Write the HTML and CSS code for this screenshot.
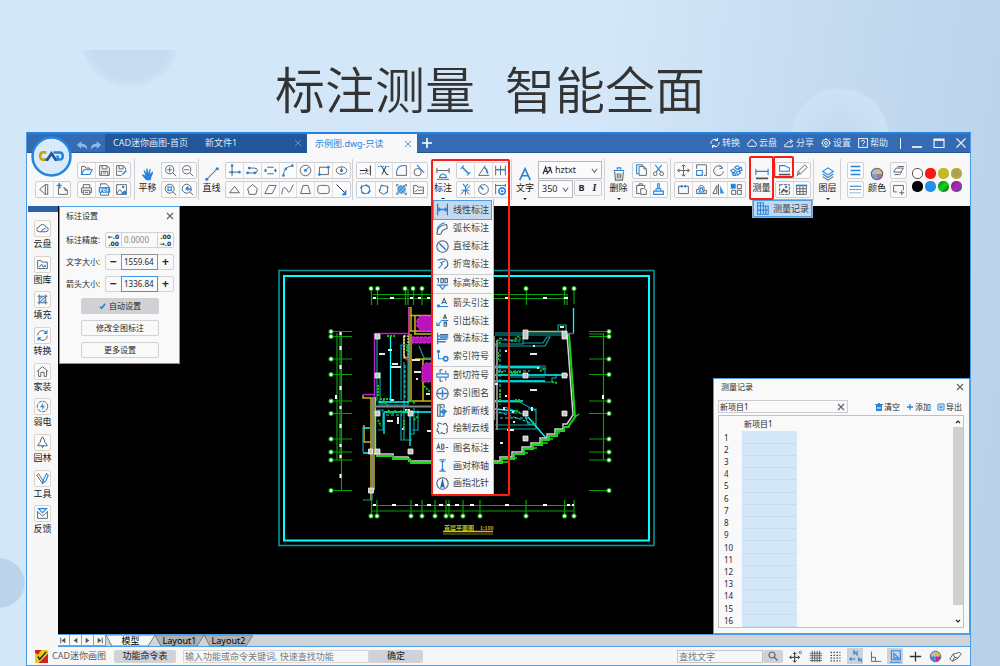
FILE: index.html
```html
<!DOCTYPE html>
<html lang="zh-CN">
<head>
<meta charset="utf-8">
<meta name="viewport" content="width=device-width, initial-scale=1">
<title>CAD迷你画图</title>
<link rel="stylesheet" href="styles.css">
</head>
<body>
<header class="hero"><h1><span>标注测量</span><span>智能全面</span></h1></header>
<main class="app">
  <div class="titlebar">
    <div class="logo"><svg viewBox="0 0 40 40"><circle cx="20" cy="20" r="18.500" fill="#d9eafa" stroke="#2186e0" stroke-width="2.400"/><path d="M15 16H11.500Q9 16 9 19.500T11.500 23H14" fill="none" stroke="#c5a60a" stroke-width="2.600"/><path d="M14 23H16L20 17L24 23H26" fill="none" stroke="#2456a0" stroke-width="2.600"/><path d="M22 16H28Q31 16 31 19.500T28 23H26V19" fill="none" stroke="#2383dc" stroke-width="2.400"/></svg></div>
    <div class="history">
      <button class="plain" aria-label="撤销"><svg class="ic12" viewBox="0 0 16 16"><path d="M1 8L7 3V6Q15 6 15 14Q12 10 7 10V13Z" fill="#8fb8e6"/></svg></button>
      <button class="plain" aria-label="重做"><svg class="ic12" viewBox="0 0 16 16"><path d="M15 8L9 3V6Q1 6 1 14Q4 10 9 10V13Z" fill="#8fb8e6"/></svg></button>
    </div>
    <nav class="filetabs">
      <button class="filetab home">CAD迷你画图-首页</button>
      <button class="filetab file">新文件1<svg class="x" viewBox="0 0 8 8"><path d="M1 1L7 7M7 1L1 7"/></svg></button>
      <button class="filetab file current">示例图.dwg-只读<svg class="x" viewBox="0 0 8 8"><path d="M1 1L7 7M7 1L1 7"/></svg></button>
      <button class="plain addtab" aria-label="新建"><svg class="ic10" viewBox="0 0 10 10"><path class="ws" d="M5 0V10M0 5H10" stroke-width="2"/></svg></button>
    </nav>
    <div class="actions">
      <button class="plain"><svg class="ic10" viewBox="0 0 12 12"><path class="w" d="M1 7A5 5 0 0 1 9 2.500M11 5A5 5 0 0 1 3 9.500M9 0V3H6M3 12V9H6"/></svg>转换</button>
      <button class="plain"><svg class="ic10" viewBox="0 0 12 12"><path class="w" d="M3 10H9Q11.500 10 11.500 7.500T9 5.500Q8.500 2 6 2T3 5.500Q.5 5.500 .5 7.700T3 10Z"/></svg>云盘</button>
      <button class="plain"><svg class="ic10" viewBox="0 0 12 12"><path class="w" d="M1 7V10.500H10V8M3 8Q3 4 9 4M7 1.500L10.500 4L7 6.500"/></svg>分享</button>
      <button class="plain"><svg class="ic10" viewBox="0 0 12 12"><circle class="w" cx="6" cy="6" r="4.300"/><circle class="w" cx="6" cy="6" r="1.700"/><path class="w" d="M6 0V2M6 10V12M0 6H2M10 6H12M2 2L3 3M9 9L10 10M10 2L9 3M3 9L2 10"/></svg>设置</button>
      <button class="plain"><svg class="ic10" viewBox="0 0 12 12"><rect class="w" x=".7" y=".7" width="10.600" height="10.600"/><path class="w" d="M4 4.500Q4 3 6 3T8 4.500T6 7M6 8.300V9.500"/></svg>帮助</button>
    </div>
    <div class="winbuttons">
      <button class="plain" aria-label="最小化"><svg class="ic12" viewBox="0 0 12 12"><path class="ws" d="M1 10H11"/></svg></button>
      <button class="plain" aria-label="最大化"><svg class="ic12" viewBox="0 0 12 12"><path class="w" d="M1 2H11V10.500H1Z"/><path class="ws" d="M1 3H11"/></svg></button>
      <button class="plain" aria-label="关闭"><svg class="ic12" viewBox="0 0 12 12"><path class="w" d="M1.500 1.500L10.500 10.500M10.500 1.500L1.500 10.500"/></svg></button>
    </div>
  </div>

  <div class="ribbon">
    <section class="sec file-sec">
      <div class="cells c2 low">
        <button aria-label="返回"><svg viewBox="0 0 16 16"><path class="g" d="M9 2L2 8L9 14ZM12 2V14H9M9 2H12"/></svg></button>
        <button aria-label="导入"><svg viewBox="0 0 16 16"><path class="g" d="M6 6H3V14H14V9L11 6H9M11 6V9H14"/><path class="b2" d="M4 0V6M1 3H7"/></svg></button>
      </div>
      <div class="stack">
        <div class="cells c3">
          <button aria-label="打开"><svg viewBox="0 0 16 16"><path class="g" d="M2 13V3H6L7 5H12V7"/><path class="b" d="M2 13L5 7H15L12 13Z"/></svg></button>
          <button aria-label="保存"><svg viewBox="0 0 16 16"><path class="g" d="M2 2H11L14 5V14H2ZM5 2V6H11V2M4 14V9H12V14M6 11H10"/></svg></button>
          <button aria-label="另存为"><svg viewBox="0 0 16 16"><path class="g" d="M8 14H2V2H10L13 5V7M5 2V6H10V2M4 9H9"/><path class="b2" d="M9 13L14 8"/></svg></button>
        </div>
        <div class="cells c3">
          <button aria-label="打印"><svg viewBox="0 0 16 16"><path class="g" d="M4 6V2H12V6M4 12H2V6H14V12H12M4 9H12V14H4ZM6 11.500H10"/></svg></button>
          <button aria-label="导出文档"><svg viewBox="0 0 16 16"><path class="g" d="M3 4V1H10L13 4V5M3 12V15H13V12"/><path d="M1 5H15V12H1Z" fill="#2585de"/><path d="M3 11V7H5V9H3M7 7V11Q9 11 9 9T7 7M11 11V7H13M11 9H13" stroke="#fff" fill="none"/></svg></button>
          <button aria-label="导出图片"><svg viewBox="0 0 16 16"><path class="g" d="M2 2H14V14H2ZM2 13L6 8L9 12"/><path class="bf" d="M8 12L12 9L14 11V14H8Z"/><circle class="bf" cx="10" cy="5" r="1.500"/></svg></button>
        </div>
      </div>
    </section>

    <section class="sec">
      <button class="big"><svg viewBox="0 0 16 16"><path class="bf" d="M6 15Q3 12 1 9Q2 7 5 10L3 4Q4 2 6 7L6 2Q8 0 8 7L10 2Q12 1 10 8L13 5Q15 5 12 11L11 15Z"/></svg>平移</button>
      <div class="stack">
        <div class="cells c2">
          <button aria-label="放大"><svg viewBox="0 0 16 16"><circle class="g" cx="7" cy="7" r="5"/><path class="g" d="M11 11L15 15"/><path class="b" d="M4 7H10M7 4V10"/></svg></button>
          <button aria-label="缩小"><svg viewBox="0 0 16 16"><circle class="g" cx="7" cy="7" r="5"/><path class="g" d="M11 11L15 15"/><path class="b" d="M4 7H10"/></svg></button>
        </div>
        <div class="cells c2">
          <button aria-label="窗口缩放"><svg viewBox="0 0 16 16"><circle class="g" cx="7" cy="7" r="5.500"/><path class="g" d="M11 11L15 15"/><path class="b" d="M5 4V10M9 4V10M4 5H10M4 9H10"/></svg></button>
          <button aria-label="上次缩放"><svg viewBox="0 0 16 16"><circle class="g" cx="7" cy="7" r="5.500"/><path class="g" d="M11 11L15 15"/><path class="bf" d="M5 7L9 3V6Q13 6 14 10Q12 8 9 8V10Z"/></svg></button>
        </div>
      </div>
    </section>

    <section class="sec">
      <button class="big"><svg viewBox="0 0 16 16"><path class="g" d="M2 14L14 2"/><circle class="bf" cx="2" cy="14" r="1.800"/><circle class="bf" cx="14" cy="2" r="1.800"/></svg>直线</button>
      <div class="stack">
        <div class="cells c7">
          <button aria-label="构造线"><svg viewBox="0 0 16 16"><path class="g" d="M5 1V15M1 10H15"/><circle class="bf" cx="5" cy="2" r="1.600"/><circle class="bf" cx="5" cy="10" r="1.800"/><circle class="bf" cx="14" cy="10" r="1.600"/></svg></button>
          <button aria-label="多段线"><svg viewBox="0 0 16 16"><path class="g" d="M4 5H10Q14 5 14 8T10 11H2"/><circle class="bf" cx="4" cy="5" r="1.700"/><circle class="bf" cx="2" cy="11" r="1.700"/><circle class="bf" cx="11" cy="11" r="1.700"/></svg></button>
          <button aria-label="跑道形"><svg viewBox="0 0 16 16"><path class="g" d="M4 4H12M4 12H12M2 6Q1 8 2 10M14 6Q15 8 14 10"/><circle class="bf" cx="2" cy="8" r="1.500"/><circle class="bf" cx="14" cy="8" r="1.500"/></svg></button>
          <button aria-label="圆弧"><svg viewBox="0 0 16 16"><path class="g" d="M3 14Q3 4 14 2"/><circle class="bf" cx="3" cy="14" r="1.600"/><circle class="bf" cx="6" cy="6" r="1.600"/><circle class="bf" cx="14" cy="2" r="1.600"/></svg></button>
          <button aria-label="圆"><svg viewBox="0 0 16 16"><circle class="g" cx="8" cy="8" r="6.500"/><circle class="bf" cx="8" cy="8" r="1.800"/><path class="b" d="M8 8L12 4"/></svg></button>
          <button aria-label="矩形"><svg viewBox="0 0 16 16"><path class="g" d="M3 4H14V13H3Z"/><circle class="bf" cx="3" cy="13" r="1.700"/><circle class="bf" cx="14" cy="4" r="1.700"/></svg></button>
          <button aria-label="椭圆"><svg viewBox="0 0 16 16"><ellipse class="g" cx="8" cy="8" rx="6.500" ry="4.500"/><circle class="bf" cx="8" cy="8" r="2"/><path class="b" d="M8 4V8"/></svg></button>
        </div>
        <div class="cells c7">
          <button aria-label="三角形"><svg viewBox="0 0 16 16"><path class="g" d="M8 4L14 12H2Z"/></svg></button>
          <button aria-label="五边形"><svg viewBox="0 0 16 16"><path class="g" d="M8 2L14 7L12 14H4L2 7Z"/></svg></button>
          <button aria-label="平行四边形"><svg viewBox="0 0 16 16"><path class="g" d="M6 3H15L10 13H1Z"/></svg></button>
          <button aria-label="样条"><svg viewBox="0 0 16 16"><path class="g" d="M1 14Q2 4 5 6T9 11T15 2"/></svg></button>
          <button aria-label="梯形"><svg viewBox="0 0 16 16"><path class="g" d="M5 3H11L14 13H2Z"/></svg></button>
          <button aria-label="圆角矩形"><svg viewBox="0 0 16 16"><rect class="g" x="1" y="3" width="14" height="10" rx="3"/></svg></button>
          <button aria-label="箭头"><svg viewBox="0 0 16 16"><path class="k" d="M2 2L12 12"/><path class="bf" d="M14 8V15H8Z"/></svg></button>
        </div>
      </div>
    </section>

    <section class="sec nosep">
      <div class="stack">
        <div class="cells c4">
          <button aria-label="延伸"><svg viewBox="0 0 16 16"><path class="k" d="M1 8H10M8 5L11 8L8 11M14 2V14"/><path class="b" d="M1 12H12" stroke-dasharray="2 1"/></svg></button>
          <button aria-label="修剪"><svg viewBox="0 0 16 16"><path class="k" d="M5 2L12 13M11 3L6 13M12 13H14"/><path class="b" d="M1 3H15" stroke-dasharray="2 1"/></svg></button>
          <button aria-label="圆角"><svg viewBox="0 0 16 16"><path class="g" d="M2 9V14H14V2H9"/><path class="b" d="M2 9Q3 3 9 2"/></svg></button>
          <button aria-label="相切"><svg viewBox="0 0 16 16"><circle class="g" cx="7" cy="10" r="4.500"/><path class="b" d="M6 1L15 11"/></svg></button>
        </div>
        <div class="cells c4">
          <button aria-label="云线"><svg viewBox="0 0 16 16"><circle class="g" cx="8" cy="8" r="5"/><path class="b2" d="M8 2L13 5M14 9L11 13M4 3L2 7M3 11L6 13"/></svg></button>
          <button aria-label="多边形云线"><svg viewBox="0 0 16 16"><path class="g" d="M5 3L13 4L13 11L8 14L3 11Z"/><path class="b2" d="M5 3H7M13 4V7M13 11L11 12M3 8V10"/></svg></button>
          <button aria-label="填充"><svg viewBox="0 0 16 16"><path d="M3 3H13V13H3Z" fill="#7fb6ea"/><path class="b" d="M3 8L8 3M3 12L12 3M7 13L13 7"/><path class="g" d="M2 4V2H4M12 2H14V4M14 12V14H12M4 14H2V12"/></svg></button>
          <button aria-label="图库"><svg viewBox="0 0 16 16"><path class="g" d="M2 13V3H6L7 5H14V13ZM4 11L7 8L9 10L11 8L13 10"/></svg></button>
        </div>
      </div>
    </section>

    <section class="sec">
      <button class="big more"><svg viewBox="0 0 16 16"><path class="g" d="M1 1V7M15 1V7M1 4H15M1 14H15"/><path class="b" d="M4 12Q5 8 8 8T12 12Z"/></svg>标注</button>
      <div class="stack">
        <div class="cells c3">
          <button aria-label="对齐标注"><svg viewBox="0 0 16 16"><path class="b2" d="M4 4L12 12"/><path class="b" d="M2 6L6 2M10 14L14 10"/></svg></button>
          <button aria-label="角度标注"><svg viewBox="0 0 16 16"><path class="g" d="M10 2L2 14H15"/><path class="b2" d="M9 4Q13 7 13 12"/></svg></button>
          <button aria-label="连续标注"><svg viewBox="0 0 16 16"><path class="g" d="M2 2V14M8 2V14M14 2V14"/><path class="b2" d="M2 7H14"/></svg></button>
        </div>
        <div class="cells c3">
          <button aria-label="坐标标注"><svg viewBox="0 0 16 16"><path class="g" d="M2 14L14 3M8 9L13 14"/><path class="b" d="M5 1L8 5L11 1M8 5V15M3 9H13"/></svg></button>
          <button aria-label="半径标注"><svg viewBox="0 0 16 16"><circle class="g" cx="8" cy="8" r="6"/><path class="b2" d="M8 8L4 4"/></svg></button>
          <button aria-label="标注样式"><svg viewBox="0 0 16 16"><path class="g" d="M2 1V14M14 1V5M2 3H14"/><circle class="b2" cx="10" cy="10" r="4"/><circle class="bf" cx="10" cy="10" r="1.500"/></svg></button>
        </div>
      </div>
      <div class="callout tall"></div>
      <div class="menu">
        <button class="on"><svg viewBox="0 0 16 16"><path class="n" d="M2 1V15M14 1V15"/><path class="b2" d="M2 8H14M5 6L3 8L5 10M11 6L13 8L11 10"/></svg>线性标注</button>
        <button><svg viewBox="0 0 16 16"><path class="n" d="M1 15Q1 4 13 3M6 15Q7 9 14 8M1 15H6M13 3L14 8"/><path class="b" d="M1 9Q4 2 11 1"/></svg>弧长标注</button>
        <button><svg viewBox="0 0 16 16"><circle class="n" cx="8" cy="8" r="7"/><path class="b2" d="M4 4L12 12"/></svg>直径标注</button>
        <button><svg viewBox="0 0 16 16"><path class="n" d="M2 4Q12 0 14 6T10 14"/><path class="b" d="M3 14L8 9L6 7L11 5"/></svg>折弯标注</button>
        <hr>
        <button><svg viewBox="0 0 16 16"><path class="n" d="M1 2H3V7M6 2H9V7H6ZM11 2H14V7H11Z"/><path class="b" d="M1 10H15M4 10L8 15L12 10"/></svg>标高标注</button>
        <hr>
        <button><svg viewBox="0 0 16 16"><path class="n" d="M7 10L10 3L13 10M8 8H12"/><path class="b" d="M2 13H15"/><circle class="bf" cx="3" cy="12" r="2"/></svg>箭头引注</button>
        <button><svg viewBox="0 0 16 16"><path class="n" d="M9 6L11 1L13 6M10 5H12M10 10V15H13V10ZM10 12H13"/><path class="b" d="M2 14L7 8H15M1 10V14H5"/></svg>引出标注</button>
        <button><svg viewBox="0 0 16 16"><path class="n" d="M2 1V15M5 3H15M5 7H15"/><path class="b2" d="M2 5H15M2 9H14M2 12H12"/></svg>做法标注</button>
        <button><svg viewBox="0 0 16 16"><path class="b" d="M3 3V12H9"/><circle class="bf" cx="3" cy="3" r="2"/><circle class="b2" cx="12" cy="12" r="2.600"/></svg>索引符号</button>
        <hr>
        <button><svg viewBox="0 0 16 16"><path class="n" d="M5 5V1H8M5 11V15H8M12 2V5M12 11V14"/><path class="b" d="M1 6H15V10H1Z"/></svg>剖切符号</button>
        <button><svg viewBox="0 0 16 16"><circle class="n" cx="8" cy="8" r="7"/><path class="b2" d="M1 8H15M8 3V13"/></svg>索引图名</button>
        <button><svg viewBox="0 0 16 16"><path class="n" d="M10 1H2V15H10M5 1V15M8 4H5M10 1V5M10 12V15"/><path class="bf" d="M8 5L14 9L8 14V11H5V8H8Z"/></svg>加折断线</button>
        <button><svg viewBox="0 0 16 16"><path class="n" d="M6 2Q2 0 2 4Q4 6 2 8Q0 12 3 12Q3 16 7 13Q10 16 13 13Q15 11 13 9Q16 6 13 4Q13 0 9 3Q8 3 6 2" stroke-dasharray="8 1"/></svg>绘制云线</button>
        <hr>
        <button><svg viewBox="0 0 16 16"><path class="n" d="M1 10L3 4L5 10M2 8H4M7 4V10H9Q11 9 9 7Q11 5 9 4Z"/><path class="b" d="M1 13H11"/><path class="n" d="M12 8H15"/></svg>图名标注</button>
        <button><svg viewBox="0 0 16 16"><path class="b" d="M4 1H12M4 15H12M8 2V14"/><path class="bf" d="M5 2H11L8 5ZM5 14H11L8 11Z"/></svg>画对称轴</button>
        <button><svg viewBox="0 0 16 16"><circle class="n" cx="8" cy="8" r="7"/><path d="M8 1L11 14L8 12L5 14Z" fill="#1c67b8"/></svg>画指北针</button>
      </div>
    </section>

    <section class="sec">
      <button class="big more"><svg viewBox="0 0 16 16"><path class="b2" d="M2 15L8 2L14 15M4 10H12"/></svg>文字</button>
      <div class="stack text-tools">
        <label class="pick font"><svg class="fonticon" viewBox="0 0 12 12"><path class="k" d="M1 10L4 2L6 8M2 7H5M6 3H10M8 2L11 9M10 4L5 10"/></svg>
          <select aria-label="字体"><option>hztxt</option></select><svg class="chev" viewBox="0 0 8 8"><path class="g" d="M1 2L4 6L7 2"/></svg></label>
        <div class="row">
          <label class="pick size"><select aria-label="字号"><option>350</option></select><svg class="chev" viewBox="0 0 8 8"><path class="g" d="M1 2L4 6L7 2"/></svg></label>
          <div class="style"><button class="bold">B</button><button class="ital">I</button></div>
        </div>
      </div>
    </section>

    <section class="sec">
      <button class="big more"><svg viewBox="0 0 16 16"><path class="g" d="M3 5L4 15H12L13 5M6 7V13M8 7V13M10 7V13"/><path class="b" d="M2 4H14M6 3V1H10V3"/></svg>删除</button>
      <div class="stack">
        <div class="cells c2">
          <button aria-label="复制"><svg viewBox="0 0 16 16"><path class="b" d="M5 12H2V1H9V3"/><path class="g" d="M5 3H11L14 6V14H5ZM11 3V6H14"/></svg></button>
          <button aria-label="剪切"><svg viewBox="0 0 16 16"><path class="b" d="M4 1L11 10M12 1L5 10"/><circle class="g" cx="4" cy="12" r="2.300"/><circle class="g" cx="12" cy="12" r="2.300"/></svg></button>
        </div>
        <div class="cells c2">
          <button aria-label="粘贴"><svg viewBox="0 0 16 16"><path class="g" d="M6 13H2V3H12V6M5 3V1H9V3M7 7H12L14 9V14H7Z"/></svg></button>
          <button aria-label="格式刷"><svg viewBox="0 0 16 16"><path class="b" d="M2 14H14V10H2ZM7 7V1H9V7M5 10V7H11V10"/></svg></button>
        </div>
      </div>
    </section>

    <section class="sec nosep">
      <div class="stack">
        <div class="cells c4">
          <button aria-label="移动"><svg viewBox="0 0 16 16"><path class="g" d="M8 2V14M2 8H14"/><path class="k" d="M6 3L8 1L10 3M6 13L8 15L10 13M3 6L1 8L3 10M13 6L15 8L13 10"/></svg></button>
          <button aria-label="缩放"><svg viewBox="0 0 16 16"><path class="g" d="M2 6V1H14V14H11"/><path class="b" d="M2 8H9V14H2Z"/></svg></button>
          <button aria-label="旋转"><svg viewBox="0 0 16 16"><path class="g" d="M13 5A6 6 0 1 0 14 9M9 1L13 5L9 6"/></svg></button>
          <button aria-label="阵列"><svg viewBox="0 0 16 16"><path class="b" d="M1 8L4 6L7 8L4 11ZM6 4L9 2L12 4L9 7ZM11 6L14 4L15 8L12 9ZM8 10L11 9L13 11L9 14ZM3 12L6 11L7 14H4Z"/></svg></button>
        </div>
        <div class="cells c4">
          <button aria-label="打断"><svg viewBox="0 0 16 16"><path class="g" d="M5 4H2V13H14V4H11"/><circle class="bf" cx="6" cy="4" r="1.500"/><circle class="bf" cx="10" cy="4" r="1.500"/></svg></button>
          <button aria-label="偏移"><svg viewBox="0 0 16 16"><path class="g" d="M2 13H14V9H11Q12 3 8 3T5 8H2Z"/><path class="b" d="M5 11H11Q9 8 9 6H7Q7 8 5 11Z"/></svg></button>
          <button aria-label="镜像"><svg viewBox="0 0 16 16"><path class="g" d="M6 3V13H1ZM8 1V15"/><path d="M10 3V13H15Z" fill="#3e8fdc"/></svg></button>
          <button aria-label="矩形阵列"><svg viewBox="0 0 16 16"><path class="g" d="M9 2H14V7H9ZM2 9H7V14H2ZM9 9H14V14H9Z"/><path class="bf" d="M1 1H7V7H1Z"/></svg></button>
        </div>
      </div>
    </section>

    <section class="sec">
      <button class="big more"><svg viewBox="0 0 16 16"><path class="b" d="M1 2V9M15 2V9M1 5H15"/><path class="g2" d="M1 13H15"/></svg>测量</button>
      <div class="stack">
        <div class="cells c2">
          <button aria-label="面积"><svg viewBox="0 0 16 16"><path class="b" d="M2 9V2H8L14 5V9Z"/><path class="g2" d="M1 13H15"/></svg></button>
          <button aria-label="画笔"><svg viewBox="0 0 16 16"><path class="g" d="M3 13L4 9L12 1L15 4L7 12ZM4 9L7 12M2 15L5 12"/></svg></button>
        </div>
        <div class="cells c2">
          <button aria-label="插入图片"><svg viewBox="0 0 16 16"><path class="g" d="M2 2H14V14H2Z" stroke-dasharray="4 1"/><path class="g2" d="M4 12L7 8L10 11L12 9"/><circle class="bf" cx="10" cy="5" r="1.500"/></svg></button>
          <button aria-label="表格"><svg viewBox="0 0 16 16"><path class="g" d="M2 3H14V14H2ZM6 3V14M10 3V14M2 7H14M2 10.500H14"/><path class="b2" d="M1 3H15"/></svg></button>
        </div>
      </div>
      <div class="callout measure"></div>
      <div class="callout area"></div>
      <div class="menu single"><button class="on"><svg viewBox="0 0 16 16"><path class="b" d="M2 1H9V15H2ZM5.500 1V15M2 5H15V15H9M2 10H15M12 5V15"/></svg>测量记录</button></div>
    </section>

    <section class="sec">
      <button class="big more"><svg viewBox="0 0 16 16"><path class="b" d="M8 1L14 5L8 9L2 5Z"/><path class="b" d="M2 8L8 12L14 8"/><path class="g" d="M2 11L8 15L14 11"/></svg>图层</button>
    </section>

    <section class="sec nosep colors">
      <div class="stack">
        <div class="cells c1"><button aria-label="线宽"><svg viewBox="0 0 16 16"><path class="b2" d="M2 3H14M2 8H14M2 13H14"/></svg></button></div>
        <div class="cells c1"><button aria-label="线型"><svg viewBox="0 0 16 16"><path class="b" d="M1 4H15"/><path class="b" d="M1 8H15" stroke-dasharray="3 1"/><path class="b" d="M1 12H15" stroke-dasharray="1 1"/></svg></button></div>
      </div>
      <button class="big"><svg viewBox="0 0 16 16"><circle cx="8" cy="8" r="6.500" fill="#b9b9c2"/><path d="M8 8V1.500A6.500 6.500 0 0 1 14.500 8Z" fill="#d8c45f"/><path d="M8 8H14.500A6.500 6.500 0 0 1 8 14.500Z" fill="#b86aa5"/><path d="M8 8V14.500A6.500 6.500 0 0 1 1.500 8Z" fill="#79a4c9"/><circle class="g" cx="8" cy="8" r="6.500"/></svg>颜色</button>
      <div class="stack">
        <div class="cells c1"><button aria-label="匹配"><svg viewBox="0 0 16 16"><path class="g" d="M2 10L5 5H14L11 10ZM7 3H15M3 13H9L12 10"/></svg></button></div>
        <div class="cells c1"><button aria-label="图框"><svg viewBox="0 0 16 16"><path class="g" d="M6 11H2V3H14V9M9 12H15M12 9V15"/></svg></button></div>
      </div>
      <div class="swatches"><button class="s-white" aria-label="白"></button><button class="s-red" aria-label="红"></button><button class="s-yellow" aria-label="黄"></button><button class="s-olive" aria-label="橄榄"></button><button class="s-black" aria-label="黑"></button><button class="s-blue" aria-label="蓝"></button><button class="s-green" aria-label="绿"></button><button class="s-purple" aria-label="紫"></button></div>
    </section>
  </div>

  <div class="workspace">
    <aside class="side">
      <div class="grip"></div>
      <nav>
        <button><svg viewBox="0 0 16 16"><path class="g" d="M4 12Q1 12 1 9T4 6Q5 3 8 3T12 6Q15 6 15 9T12 12Z"/><path class="b" d="M7 12Q8 8 12 8"/></svg>云盘</button>
        <button><svg viewBox="0 0 16 16"><path class="g" d="M2 13V3H6L7 5H14V13Z"/><path class="b" d="M4 11L7 8L9 11L11 9L12 11"/></svg>图库</button>
        <button><svg viewBox="0 0 16 16"><path class="g" d="M2 4H14M2 12H14M4 2V14M12 2V14"/><path class="b" d="M5 7L8 4M5 11L11 5M8 12L12 8"/></svg>填充</button>
        <button><svg viewBox="0 0 16 16"><path class="g" d="M2 8A6 6 0 0 1 12 3.500M14 8A6 6 0 0 1 4 12.500"/><path class="bf" d="M14 1V6H9ZM2 15V10H7Z"/></svg>转换</button>
        <button><svg viewBox="0 0 16 16"><path class="g" d="M1 8L8 2L15 8M3 7V14H6V9H10V14H13V7"/></svg>家装</button>
        <button><svg viewBox="0 0 16 16"><circle class="g" cx="8" cy="8" r="6.500" stroke-dasharray="5 1"/><path class="bf" d="M9 3L5 9H8L7 13L11 7H8Z"/></svg>弱电</button>
        <button><svg viewBox="0 0 16 16"><path class="g" d="M8 1L11 6H10L14 12H2L6 6H5Z"/><path class="bf" d="M6 12H10L8 15Z"/></svg>园林</button>
        <button><svg viewBox="0 0 16 16"><path class="g" d="M1 4L3 2L9 11L8 14Z"/><path class="b" d="M8 14L9 10L13 2L15 4L12 11Z"/></svg>工具</button>
        <button><svg viewBox="0 0 16 16"><path class="g" d="M2 5V14H14V5"/><path class="g" d="M2 6L8 11L14 6"/><path class="b" d="M3 2H13L8 7Z"/></svg>反馈</button>
      </nav>
    </aside>

    <div class="stage">
      <div class="canvas">
        <svg class="drawing" viewBox="58 206 912 428" fill="none">
          <rect x="279" y="270.500" width="375" height="275" stroke="#0a9494" stroke-width="1.600"/>
          <rect x="284" y="276" width="365" height="264.500" stroke="#0ff" stroke-width="2"/>
          <g stroke="#0a9d0a" stroke-width="1.200">
            <path d="M373 294.500H567M371 298.500H567M371 505.500H574M371 511H574"/>
            <path d="M371.500 289V305M377.500 289V305M405.500 289V305M408 289V305M413.500 289V305M422 289V305M526.500 289V305M564.500 289V305M567 294V305M574 289V304"/>
            <path d="M371.500 500V516M377 500V516M411 500V516M422 500V516M435 500V516M446 500V516M449 500V516M463 500V516M480 500V516M526 500V516M564.500 500V516M574 500V516"/>
            <path d="M331 331.500H352M331 336.500H352M331 359H352M331 374.500H352M331 401H352M331 413.500H352M331 439H352M331 452H352M331 460H352M331 490.500H352M337 333V460M341.500 331V490M340 333V460"/>
            <path d="M589 331.500H609M589 334H604M589 336.500H609M589 359H609M589 374.500H609M589 401H609M589 413.500H609M589 439H609M589 452H609M589 460H609M589 490.500H609M603.500 333V460"/>
          </g>
          <g stroke="#12b512" stroke-width="5" stroke-linecap="round">
            <path d="M371 288.500h0M377.500 288.500h0M405 288.500h0M413 288.500h0M422 288.500h0M526 288.500h0M564.500 288.500h0M574 288.500h0M371 516h0M377 516h0M411 516h0M422 516h0M435 516h0M446 516h0M452 516h0M463 516h0M480 516h0M526 516h0M564.500 516h0M574 516h0M331 331.500h0M331 336.500h0M331 359h0M331 374.500h0M331 401h0M331 413.500h0M331 439h0M331 452h0M331 460h0M331 490.500h0M609 331.500h0M609 336.500h0M609 359h0M609 374.500h0M609 401h0M609 413.500h0M609 439h0M609 452h0M609 460h0M609 490.500h0"/>
            <path stroke="#fff" stroke-width="3" d="M371 288.500h0M377.500 288.500h0M405 288.500h0M413 288.500h0M422 288.500h0M526 288.500h0M564.500 288.500h0M574 288.500h0M371 516h0M377 516h0M411 516h0M422 516h0M435 516h0M446 516h0M452 516h0M463 516h0M480 516h0M526 516h0M564.500 516h0M574 516h0M331 331.500h0M331 336.500h0M331 359h0M331 374.500h0M331 401h0M331 413.500h0M331 439h0M331 452h0M331 460h0M331 490.500h0M609 331.500h0M609 336.500h0M609 359h0M609 374.500h0M609 401h0M609 413.500h0M609 439h0M609 452h0M609 460h0M609 490.500h0"/>
          </g>
          <g stroke="#fff" stroke-width="2">
            <path d="M373 298h3M390 298h4M410 298h3M418 298h3M427 298h3M505 298h4M543 298h4M564 298h4M373 505h3M392 505h4M415 505h3M427 505h4M439 505h4M447 505h3M455 505h4M470 505h4M505 505h4M543 505h4M567 505h3M572 505h2"/>
            <path d="M340.500 332v3M340.500 346v4M340.500 365v4M340.500 386v4M340.500 406v3M340.500 424v4M340.500 444v3M340.500 455v3M340.500 474v4M336 395v4M603 395v4"/>
          </g>
          <g stroke="#c9b51c" stroke-width="1.500">
            <path d="M409 307V334M411 307V331M409 315.500H470M411 334V401H500M414 334H470M423 359V401M409 334V401H423M415 315V334M409 331H455M527 331.500H563M363 395V398H371V500M374 397V490M364 425V442H371M404 335V358H409M415 359H470"/>
          </g>
          <path d="M404 336V357H408V336Z" stroke="#fff" stroke-dasharray="2 1"/>
          <path d="M417 319H419V316H440V331H419V327H417ZM412 337H440V343H412ZM422 366L426 363H440V382H422Z" fill="#b914b9" stroke="#e030e0" stroke-dasharray="3 1"/>
          <g stroke="#08a3a8" stroke-width="1.200">
            <path d="M377 336V401M380 372V403H386M378 405H408V345H401V400M404 362V440H412M401 410V440H408M377 410H383V430H378M414 408V434H410M419 346L424 358H432M412 430H418V410M363 427V452M372 485V500H363"/>
            <path d="M495 333H562M495 335H570M497 340H520V337M523 337V344H495V346H545L550 337H547L543 343H523M497 346V430M495 366H546M495 368H545V374M495 382H552V378H556V374M510 377H545M495 402H520L536 411V424H528L525 415L505 407M495 425H536M495 429H536V409H528M558 332V325H566V331M495 413H517"/>
          </g>
          <g stroke="#0ff" stroke-width="1.300"><path d="M390.500 335V402M378 402H409M384 412H440M384 413V434M410 412V446M375.500 397V454M495 375H568M495 381H545M495 401H523M495 409L515 411M528 417L546 438M363 428H370M363 453H369M573.500 308V333M495 367H540"/></g>
          <g stroke="#27d7e8" stroke-width="1" stroke-dasharray="3 2"><path d="M405 365V400M499 338L520 342M500 349V405M498 371H530M499 412L531 423M500 418H530M386 415H402"/></g>
          <path d="M375 406.500H440M372.500 397V490M494 336V420M497 340V430" stroke="#858585" stroke-width="2"/>
          <path d="M374.500 397V333.500H409M409 333V308M363 394.500H374M567 333.500H574" stroke="#c01fc0" stroke-width="1.500"/>
          <path d="M567 334L573 415L567 424H563V429H555V434H547V438H540V443H531V447H522V452H512V457H500V461H490V466H470V468H450V461H411L408 457H393V454H374" stroke="#d4d4d4" stroke-width="1.500"/>
          <path d="M569 334L575 417L568 427H564V431H557V436H549V440H542V445H533V449H524V454H514V459H502V463H492V468H450V463H411V461H409V459H393V456H376" stroke="#16d916" stroke-width="2"/>
          <path d="M575 417L579 414M563 427H570M555 433H560M548 439H553M540 443H548M532 448H537M523 453H528M512 458H517M501 462H508" stroke="#16d916" stroke-width="1.500"/>
          <g stroke="#e9e9e9" stroke-width="2"><path d="M379 354h6M392 364h6M391 367h10M388 350h4M414 372h7M416 379h2M426 394h4M427 431h5M387 421h6M412 360h8M530 354h7M530 390h7M507 430h7M398 417v7M403 428v2M391 400h3M505 351h2M533 346h2M537 368h2M504 407v3M512 412h2M532 407v4M495 384h3M505 396h2M405 410h5M513 422h2M560 327h4M500 443h3"/></g>
          <g stroke="#12c512" stroke-width="2" stroke-dasharray="2 1"><path d="M387 336h8M380 399h10M378 385v12M383 400l5 6M388 410l4 4l4-4M397 412h6M408 410l-3 3M411 400l4 4M497 340l4 4M498 352v8M498 372h6M500 390v12M508 341h6M515 339l4-3M510 372h12M540 371l6-3M552 382l5 1M515 400h6M516 410l5 4M532 421l4 4M404 420v10M414 420l4-4M424 386l6 6M407 346v6M378 420l3 6M508 373h10"/></g>
          <g fill="#c8c8c8" stroke="#f4f4f4" stroke-width=".8"><path d="M375 334h5v5h-5zM375 373h5v5h-5zM375 411h5v5h-5zM408 411h5v5h-5zM375 449h5v5h-5zM408 449h5v5h-5zM368.500 449h4v5h-4zM368.500 488h5v5h-5zM523 330h5v9h-5zM562 331h5v8h-5zM523 373h5v5h-5zM562 373h5v5h-5zM523 411h5v5h-5zM562 411h5v5h-5zM523 436h5v5h-5z"/></g>
          <circle cx="407" cy="359" r="1.500" fill="#f22"/>
          <path d="M443 531.500H493" stroke="#d1bd1e" stroke-width="1.500"/><path d="M443 534H493" stroke="#8a7c10" stroke-width="1"/>
          <text x="444" y="530" class="plan">首层平面图</text><text x="480" y="530" class="plan ratio">1:100</text>
        </svg>

        <form class="panel settings">
          <div class="phead"><span>标注设置</span><button type="button" class="plain" aria-label="关闭"><svg class="ic8" viewBox="0 0 8 8"><path class="g" d="M1 1L7 7M7 1L1 7"/></svg></button></div>
          <div class="field"><label for="prec">标注精度:</label><div class="stepper flat"><button type="button" class="dec">←.0<br>.00</button><input id="prec" value="0.0000"><button type="button" class="dec">.00<br>→.0</button></div></div>
          <div class="field"><label for="tsize">文字大小:</label><div class="stepper"><button type="button">−</button><input id="tsize" value="1559.64"><button type="button">+</button></div></div>
          <div class="field"><label for="asize">箭头大小:</label><div class="stepper active"><button type="button">−</button><input id="asize" value="1336.84"><button type="button">+</button></div></div>
          <button type="button" class="wide auto"><svg class="tick" viewBox="0 0 8 8"><path class="b2" d="M1 4L3 6L7 1"/></svg>自动设置</button>
          <button type="button" class="wide">修改全图标注</button>
          <button type="button" class="wide">更多设置</button>
        </form>

        <section class="panel records">
          <div class="phead"><span>测量记录</span><button class="plain" aria-label="关闭"><svg class="ic8" viewBox="0 0 8 8"><path class="g" d="M1 1L7 7M7 1L1 7"/></svg></button></div>
          <div class="rtools">
            <div class="namebox"><input aria-label="项目名称" value="新项目1"><button class="plain" aria-label="清除"><svg class="ic8" viewBox="0 0 8 8"><path class="g" d="M1 1L7 7M7 1L1 7"/></svg></button></div>
            <button class="plain"><svg class="ic8" viewBox="0 0 8 8"><path class="bf" d="M1 2H7V8H1ZM0 1H8V2H0ZM3 0H5V1H3Z"/><path d="M3 4V6M5 4V6" stroke="#fff"/></svg>清空</button>
            <button class="plain"><svg class="ic8" viewBox="0 0 8 8"><path class="b" d="M4 1V7M1 4H7"/></svg>添加</button>
            <button class="plain"><svg class="ic8" viewBox="0 0 8 8"><path d="M1 1H7V7H1ZM3 3H5V5H3Z" fill="none" stroke="#2585de"/></svg>导出</button>
          </div>
          <div class="tablebox">
            <table>
              <thead><tr><th></th><th>新项目1</th></tr></thead>
              <tbody><tr><td>1</td><td></td></tr><tr><td>2</td><td></td></tr><tr><td>3</td><td></td></tr><tr><td>4</td><td></td></tr><tr><td>5</td><td></td></tr><tr><td>6</td><td></td></tr><tr><td>7</td><td></td></tr><tr><td>8</td><td></td></tr><tr><td>9</td><td></td></tr><tr><td>10</td><td></td></tr><tr><td>11</td><td></td></tr><tr><td>12</td><td></td></tr><tr><td>13</td><td></td></tr><tr><td>14</td><td></td></tr><tr><td>15</td><td></td></tr><tr><td>16</td><td></td></tr></tbody>
            </table>
            <div class="scroll"><svg class="ic8" viewBox="0 0 8 8"><path class="k" d="M2 5L4 3L6 5"/></svg><div class="thumb"></div><svg class="ic8" viewBox="0 0 8 8"><path class="k" d="M2 3L4 5L6 3"/></svg></div>
          </div>
        </section>
      </div>
      <div class="sheets">
        <div class="pager"><button aria-label="第一页"><svg viewBox="0 0 12 12"><path class="g" d="M3 3V9"/><path d="M8 3V9L4 6Z" fill="#555"/></svg></button><button aria-label="上一页"><svg viewBox="0 0 12 12"><path d="M8 3V9L4 6Z" fill="#555"/></svg></button><button aria-label="下一页"><svg viewBox="0 0 12 12"><path d="M4 3V9L8 6Z" fill="#555"/></svg></button><button aria-label="最后一页"><svg viewBox="0 0 12 12"><path d="M4 3V9L8 6Z" fill="#555"/><path class="g" d="M9 3V9"/></svg></button></div>
        <button class="sheet"><svg viewBox="0 0 50 12" preserveAspectRatio="none"><path d="M0 0L6 12H43L50 0Z" fill="#f8f8f8" stroke="#777"/></svg><span>模型</span></button>
        <button class="sheet"><svg viewBox="0 0 50 12" preserveAspectRatio="none"><path d="M0 0L6 12H43L50 0Z" fill="#b1b1b1" stroke="#777"/></svg><span>Layout1</span></button>
        <button class="sheet"><svg viewBox="0 0 50 12" preserveAspectRatio="none"><path d="M0 0L6 12H43L50 0Z" fill="#b1b1b1" stroke="#777"/></svg><span>Layout2</span></button>
      </div>
    </div>
  </div>

  <footer class="status">
    <svg class="appmark" viewBox="0 0 14 14"><rect width="14" height="14" rx="1" fill="#e8c91a"/><path d="M4 14L14 4V14Z" fill="#d61f26"/><path d="M0 0H7L3 5L0 3Z" fill="#d61f26"/><path d="M3 7L5 10L12 2" fill="none" stroke="#222" stroke-width="1.500"/></svg>
    <span class="appname">CAD迷你画图</span>
    <button class="grey cmds">功能命令表</button>
    <div class="cmdline"><input aria-label="命令" placeholder="输入功能或命令关键词, 快速查找功能"><button class="grey ok">确定</button></div>
    <div class="find"><input aria-label="查找" placeholder="查找文字"><button class="grey" aria-label="搜索"><svg class="ic10" viewBox="0 0 10 10"><circle class="g" cx="4" cy="4" r="3"/><path class="g" d="M6 6L9.500 9.500"/></svg></button></div>
    <div class="modes">
      <button aria-label="平移视图"><svg viewBox="0 0 16 16"><path class="k" d="M7 3V15M1 9H13M5 5L7 3L9 5M5 13L7 15L9 13M3 7L1 9L3 11M11 7L13 9L11 11"/><circle class="g" cx="14" cy="3" r="1.500"/></svg></button>
      <button aria-label="网格"><svg viewBox="0 0 16 16"><path class="g" d="M4 1V15M7 1V15M10 1V15M13 1V15M1 4H16M1 7H16M1 10H16M1 13H16"/></svg></button>
      <button aria-label="捕捉"><svg viewBox="0 0 16 16"><path stroke="#333" stroke-width="1.600" stroke-dasharray="1.600 2" d="M2 3H14M2 6.500H14M2 10H14M2 13.500H14"/></svg></button>
      <button class="on" aria-label="极轴"><svg viewBox="0 0 16 16"><path class="b" d="M6 6V1L10 6V1M12 14V10L15 14V10M1 11H8M3 9L1 11L3 13"/></svg></button>
      <button aria-label="正交"><svg viewBox="0 0 16 16"><path class="g" d="M3 2V14H15M3 9H8V14"/></svg></button>
      <button class="on" aria-label="显示"><svg viewBox="0 0 16 16"><path class="b" d="M3 1H14V12H3ZM1 15H15M6 4L12 10H6Z"/></svg></button>
      <button aria-label="十字光标"><svg viewBox="0 0 16 16"><path stroke="#333" stroke-width="1.600" d="M8 2V14M1 8H15"/></svg></button>
      <button aria-label="颜色"><svg viewBox="0 0 16 16"><circle cx="8" cy="8" r="6.500" fill="#b9b9c2"/><path d="M8 8V1.500A6.500 6.500 0 0 1 14.500 8Z" fill="#d9c437"/><path d="M8 8H14.500A6.500 6.500 0 0 1 8 14.500Z" fill="#d422a5"/><path d="M8 8V14.500A6.500 6.500 0 0 1 1.500 8Z" fill="#3c8edb"/><circle class="g" cx="8" cy="8" r="6.500"/></svg></button>
      <button aria-label="图层"><svg viewBox="0 0 16 16"><path class="g" d="M1 11L5 5L13 3L15 5L11 10L4 14ZM5 5L7 9L11 10M7 9L4 14"/></svg></button>
    </div>
  </footer>
</main>
</body>
</html>
```

FILE: styles.css
```css
* { box-sizing: border-box; }
body {
  margin: 0;
  min-height: 100vh;
  display: flex;
  flex-direction: column;
  font: 9px/12px "Noto Sans", "Noto Sans CJK SC", sans-serif;
  color: #26292e;
  background:
    radial-gradient(circle 25px at 0 583px, #bcd3ec 96%, transparent),
    radial-gradient(circle 50px at 840px 137px, #c3d9ef 0, #cfe1f4 94%, transparent),
    linear-gradient(#d4e7f8 50px, transparent 50px) 70px 0 / 120px 90px no-repeat,
    radial-gradient(circle 50px at 130px 38px, #c6dcf2 80%, #cde1f5 94%, transparent),
    linear-gradient(98deg, #d4e7f8 56%, #c4daef 78%, #b9d0ea);
}
button, input, select { font: inherit; color: inherit; margin: 0; padding: 0; border: 0; background: none; border-radius: 0; min-width: 0; }
button { display: flex; align-items: center; justify-content: center; white-space: nowrap; }
svg { display: block; flex: none; }

.g, .b, .b2, .g2, .n, .k, .w, .ws { fill: none; }
.g { stroke: #61666d; stroke-width: 1.2; }
.g2 { stroke: #50555c; stroke-width: 2; }
.n { stroke: #4b6178; stroke-width: 1.3; }
.k { stroke: #24272b; stroke-width: 1.2; }
.b { stroke: #2585de; stroke-width: 1.3; }
.b2 { stroke: #2585de; stroke-width: 1.9; }
.bf { fill: #2585de; }
.w { stroke: #e6f1fc; stroke-width: 1.2; }
.ws { stroke: #fff; stroke-width: 1.6; }
.ic8 { width: 8px; height: 8px; }
.ic10 { width: 10px; height: 10px; }
.ic12 { width: 12px; height: 12px; }
.plain { gap: 2px; }

.hero { height: 132px; flex: none; display: flex; align-items: flex-end; justify-content: center; padding: 0 20px 8px 0; }
.hero h1 { margin: 0; display: flex; gap: 30px; font: 350 50px/74px "Noto Sans CJK SC", sans-serif; color: #333; white-space: nowrap; }

.app { flex: 1; margin: 0 29px 0 26px; display: flex; flex-direction: column; border: 1px solid #4a9ce6; border-top: 2px solid #1e86e2; background: #f7f7f8; }

.titlebar { position: relative; display: flex; height: 19px; background: #356bb3; border-bottom: 1px solid #245590; color: #dfeaf7; }
.logo { position: absolute; left: 4px; top: 2px; width: 41px; height: 41px; z-index: 2; }
.logo svg { width: 100%; height: 100%; }
.history { display: flex; gap: 2px; width: 78px; justify-content: flex-end; padding: 3px 3px 0 0; }
.filetabs { display: flex; flex: 1; }
.filetab { background: #24569a; justify-content: space-between; padding: 0 5px 0 8px; }
.filetab.home { width: 92px; }
.filetab.file { width: 110px; }
.filetab.current { background: #f8f8f8; color: #2585de; height: 19px; }
.x { width: 8px; height: 8px; fill: none; stroke: #4e9ade; }
.addtab { width: 20px; }
.actions { display: flex; gap: 7px; padding-right: 12px; }
.winbuttons { display: flex; align-items: center; gap: 10px; padding: 0 3px 0 11px; }
.winbuttons::before { content: ""; width: 1px; height: 11px; background: #e6f1fc; margin: 0 0 0 -11px; }

.ribbon { display: grid; grid-template-columns: minmax(0, 108fr) minmax(0, 64fr) minmax(0, 154fr) minmax(0, 78fr) minmax(0, 81fr) minmax(0, 93fr) minmax(0, 66fr) minmax(0, 77fr) minmax(0, 66fr) minmax(0, 27fr) minmax(0, 129fr); height: 53px; background: #f8f8f8; }
.sec { position: relative; display: flex; align-items: center; justify-content: center; gap: 3px; }
.sec::after { content: ""; position: absolute; right: 0; top: 6px; bottom: 6px; width: 1px; background: #cfd1d5; }
.sec.nosep::after { display: none; }
.file-sec { justify-content: flex-end; gap: 6px; padding-right: 4px; }
.low { align-self: flex-end; margin-bottom: 8px; }
.stack { display: grid; gap: 2px; }
.cells { display: grid; height: 17px; border: 1px solid #cdcfd4; border-radius: 2px; background: #fbfbfb; }
.c1 { grid-template-columns: 15px; }
.c2 { grid-template-columns: repeat(2, 1fr); width: 36px; }
.c3 { grid-template-columns: repeat(3, 1fr); width: 54px; }
.c4 { grid-template-columns: repeat(4, 1fr); width: 72px; }
.c7 { grid-template-columns: repeat(7, 1fr); width: 126px; }
.cells button + button { border-left: 1px solid #e2ddd6; }
.cells svg { width: 13px; height: 13px; }
.big { position: relative; flex-direction: column; gap: 1px; width: 20px; height: 36px; padding-top: 2px; color: #17191c; }
.big svg { width: 14px; height: 14px; }
.big.more::after { content: ""; position: absolute; bottom: -2px; border: 2px solid transparent; border-top-color: #222; border-bottom: 0; }

.callout { position: absolute; border: 2px solid #fb1d14; border-radius: 2px; z-index: 6; pointer-events: none; }
.callout.tall { left: 0; top: 6px; width: 79px; height: 337px; }
.callout.measure { left: 1px; top: 3px; width: 25px; height: 44px; }
.callout.area { left: 25px; top: 3px; width: 21px; height: 22px; }
.menu { position: absolute; left: 1px; top: 46px; width: 62px; height: 295px; padding: 1px 1px 2px; z-index: 5; display: flex; flex-direction: column; background: #f8f8f8; border-right: 1px solid #b8bbc0; }
.menu button { flex: 1; justify-content: flex-start; gap: 4px; padding-left: 3px; color: #3a3f45; }
.menu svg { width: 13px; height: 13px; }
.menu .on { background: #c3d9f0; border: 1px solid #4f9de2; padding-left: 2px; }
.menu hr { width: 100%; height: 1px; margin: 1px 0 0; border: 0; background: #c9ccd1; }
.menu.single { left: 4px; top: 46px; width: 61px; height: 19px; padding: 0; border: 1px solid #8fb4d8; }

.text-tools { gap: 1px; }
.pick { display: flex; align-items: center; border: 1px solid #b4b7bc; background: #fbfbfb; padding: 0 3px; }
.pick.font { width: 64px; height: 18px; }
.pick.size { width: 35px; height: 18px; }
.pick select { appearance: none; flex: 1; width: 10px; height: 14px; }
.fonticon { width: 11px; height: 11px; margin-right: 2px; }
.chev { width: 7px; height: 7px; }
.row { display: flex; gap: 1px; }
.style { flex: 1; display: grid; grid-template-columns: 1fr 1fr; height: 16px; border: 1px solid #cdcfd4; border-radius: 2px; }
.bold { font-weight: 700; }
.ital { font: italic 700 10px/12px "Liberation Serif", serif; }
.colors { justify-content: flex-start; padding-left: 6px; }
.swatches { display: grid; grid-template-columns: repeat(4, 11px); gap: 2px; margin-left: 2px; }
.swatches button { height: 11px; border-radius: 5px; }
.swatches .s-white { background: #fff; border: 1px solid #555; }
.swatches .s-red { background: #fb1616; }
.swatches .s-yellow { background: #c5b820; }
.swatches .s-olive { background: radial-gradient(#a39e57, #bdb22e); }
.swatches .s-black { background: #000; }
.swatches .s-blue { background: #2190ea; }
.swatches .s-green { background: linear-gradient(135deg, #0c6d1b, #16d51b 50%, #244a25); }
.swatches .s-purple { background: linear-gradient(135deg, #593a56, #b91fb9 50%, #276b77); }

.workspace { flex: 1; display: flex; }
.side { width: 31px; background: #f7f7f8; }
.grip { height: 6px; margin-left: 1px; background: #2c61aa; }
.side nav { display: grid; grid-auto-rows: 1fr; height: 321px; margin-top: 8px; }
.side button { flex-direction: column; justify-content: flex-start; gap: 1px; color: #17191c; }
.side button svg { width: 17px; height: 17px; padding: 1px; border: 1px solid #d9d5cd; border-radius: 2px; background: #fbfbfb; }
.stage { flex: 1; display: flex; flex-direction: column; min-width: 0; }
.canvas { position: relative; flex: 1; background: #000; overflow: hidden; }
.drawing { width: 100%; height: 100%; position: absolute; }
.plan { font: 700 6px "Noto Sans CJK SC", sans-serif; fill: #d1bd1e; }
.plan.ratio { font-size: 5px; }

.panel { position: absolute; background: #f9f9f9; border: 1px solid #4f9de2; font-size: 8px; }
.phead { display: flex; justify-content: space-between; }
.phead button { height: 12px; }
.settings { left: 1px; top: 0; width: 121px; padding: 3px 5px 5px 6px; display: grid; gap: 6px; }
.settings .phead { height: 16px; }
.field { display: flex; justify-content: space-between; align-items: center; height: 16px; }
.stepper { display: flex; width: 69px; height: 16px; border: 1px solid #cfd1d5; border-radius: 2px; }
.stepper button { width: 15px; font: 700 12px/12px "Noto Sans", sans-serif; }
.stepper input { flex: 1; width: 20px; border: 1px solid #8c9096; padding: 0 2px; margin: -1px 0; font-size: 8px; }
.stepper .dec { font: 700 6px/7px "DejaVu Sans", sans-serif; }
.stepper.flat input { border-color: #cfd1d5; color: #85898f; }
.stepper.active input { border-color: #3f97e4; }
.wide { width: 78px; height: 16px; margin-left: 15px; gap: 3px; border: 1px solid #cfd1d5; border-radius: 2px; background: #f9f9f9; }
.wide.auto { background: #d0d1d4; }
.tick { width: 7px; height: 7px; }

.records { right: 0; bottom: 0; width: 257px; padding: 2px 5px 5px 4px; }
.records .phead { padding-left: 3px; height: 19px; align-items: flex-start; }
.rtools { display: flex; gap: 6px; padding-right: 2px; margin-bottom: 2px; }
.rtools > button { gap: 1px; }
.namebox { display: flex; width: 130px; height: 13px; margin-right: auto; border: 1px solid #cacdd2; padding-right: 2px; }
.namebox input { flex: 1; padding-left: 1px; }
.tablebox { display: flex; justify-content: space-between; border: 1px solid #bfc1c5; }
table { border-collapse: collapse; height: 211px; line-height: 11px; }
th { height: 15px; padding: 0; font-weight: 400; text-align: left; }
th:last-child { padding-left: 2px; }
td { padding: 0; }
td:first-child, th:first-child { width: 23px; padding-left: 5px; }
td:last-child { width: 55px; background: #d4e7f8; border-bottom: 1px solid #c8dcf0; }
.scroll { display: flex; flex-direction: column; align-items: center; width: 11px; padding: 2px 0; }
.thumb { flex: 1; width: 10px; margin: 1px 0 12px; background: #cfd0d4; }

.sheets { display: flex; height: 13px; background: #d0d3d8; border-top: 1px solid #4f9de2; border-bottom: 1px solid #4f9de2; }
.pager { display: flex; width: 48px; }
.pager button { flex: 1; border: 1px solid #9a9da2; border-width: 0 1px 1px 0; background: #f8f8f8; }
.pager svg { width: 11px; height: 11px; }
.sheet { position: relative; width: 49px; font-size: 9px; color: #000; }
.sheet svg { position: absolute; inset: 0; width: 100%; height: 100%; }
.sheet span { position: relative; }

.status { display: flex; align-items: center; height: 18px; padding: 0 7px 0 8px; color: #555a61; }
.appmark { width: 13px; height: 13px; }
.appname { width: 62px; margin: 0 0 0 4px; white-space: nowrap; }
.grey { background: #d0d2d7; border-radius: 2px; color: #17191c; height: 13px; }
.cmds { width: 62px; margin-right: 7px; }
.cmdline, .find { display: flex; }
.cmdline input { width: 186px; height: 13px; border: 1px solid #d5d6da; padding: 0 1px; }
.ok { width: 54px; }
.find { margin-left: auto; }
.find input { width: 86px; height: 13px; border: 1px solid #c5c7cb; padding: 0 1px; }
.find .grey { width: 20px; }
input::placeholder { color: #75797f; opacity: 1; }
.modes { display: grid; grid-template-columns: repeat(9, 16px); gap: 4px; padding-left: 4px; }
.modes button { height: 16px; }
.modes svg { width: 13px; height: 13px; }
.modes .on { background: #cfd3d9; }
```
